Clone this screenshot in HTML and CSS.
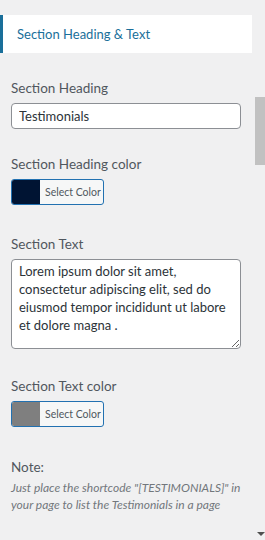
FILE: index.html
```html
<!DOCTYPE html>
<html lang="en">
<head>
    <meta charset="UTF-8">
    <meta name="viewport" content="width=device-width, initial-scale=1.0">
    <title>Testimonials Settings</title>
    <link rel="stylesheet" href="styles.css">
</head>
<body>
    <div class="panel">
        <div class="tab">Section Heading &amp; Text</div>

        <div class="field">
            <label for="heading">Section Heading</label>
            <input type="text" id="heading" value="Testimonials">
        </div>

        <div class="field">
            <label>Section Heading color</label>
            <button type="button" class="color-btn">
                <span class="swatch navy"></span>
                <span class="btn-text">Select Color</span>
            </button>
        </div>

        <div class="field wide">
            <label for="text">Section Text</label>
            <textarea id="text" rows="4">Lorem ipsum dolor sit amet, consectetur adipiscing elit, sed do eiusmod tempor incididunt ut labore et dolore magna .</textarea>
        </div>

        <div class="field after-text">
            <label>Section Text color</label>
            <button type="button" class="color-btn">
                <span class="swatch grey"></span>
                <span class="btn-text">Select Color</span>
            </button>
        </div>

        <div class="note">
            <h4>Note:</h4>
            <p>Just place the shortcode "[TESTIMONIALS]" in your page to list the Testimonials in a page</p>
        </div>

        <!-- fake scrollbar of the customizer pane -->
        <div class="scrollbar">
            <div class="thumb"></div>
            <div class="arrow"></div>
        </div>
    </div>
</body>
</html>
```

FILE: styles.css
```css
body {
    margin: 0;
    padding: 0;
    background: #f0f0f1;
    font-family: 'Lato', sans-serif;
    color: #3c434a;
}

.panel {
    position: relative;
    height: 540px;
    padding-top: 15px;
    box-sizing: border-box;
}

.tab {
    width: 252px;
    height: 38px;
    box-sizing: border-box;
    background: #fff;
    border-left: 3px solid #1a6f9a;
    padding-left: 14px;
    line-height: 38px;
    font-size: 13px;
    color: #1a6f9a;
}

.field {
    padding: 0 24px 0 11px;
    margin-top: 26px;
}

.field.wide {
    margin-top: 30px;
}

.field.after-text {
    margin-top: 28px;
}

label {
    display: block;
    font-size: 13.5px;
    color: #50575e;
    line-height: 18px;
    margin-bottom: 6px;
}

input[type="text"],
textarea {
    display: block;
    width: 230px;
    box-sizing: border-box;
    border: 1px solid #8c8f94;
    border-radius: 4px;
    background: #fff;
    font-family: 'Lato', sans-serif;
    font-size: 13px;
    color: #2c3338;
    margin: 0;
}

input[type="text"] {
    height: 26px;
    padding: 0 7px;
}

textarea {
    height: 90px;
    padding: 2px 6px 2px 7px;
    line-height: 18px;
    resize: vertical;
}

.color-btn {
    display: flex;
    align-items: stretch;
    width: 93px;
    height: 26px;
    padding: 0;
    border: 1px solid #2271b1;
    border-radius: 3px;
    background: #f6f7f7;
    overflow: hidden;
    cursor: pointer;
}

.swatch {
    width: 28px;
}

.swatch.navy {
    background: #001433;
}

.swatch.grey {
    background: #7f7f7f;
}

.btn-text {
    flex: 1;
    padding-left: 5px;
    text-align: left;
    white-space: nowrap;
    font-family: 'Lato', sans-serif;
    font-size: 10.5px;
    line-height: 24px;
    color: #50575e;
}

.note {
    padding: 0 14px 0 11px;
    margin-top: 31px;
}

.note h4 {
    margin: 0 0 3px;
    font-size: 13.5px;
    font-weight: normal;
    line-height: 18px;
    color: #50575e;
}

.note p {
    margin: 0;
    font-size: 12px;
    font-style: italic;
    line-height: 17px;
    color: #72777c;
}

.scrollbar {
    position: absolute;
    top: 0;
    right: 0;
    width: 11px;
    height: 540px;
}

.thumb {
    position: absolute;
    top: 97px;
    left: 1px;
    width: 10px;
    height: 68px;
    background: #c1c1c1;
}

.arrow {
    position: absolute;
    bottom: 4px;
    left: 3px;
    width: 0;
    height: 0;
    border-left: 4px solid transparent;
    border-right: 4px solid transparent;
    border-top: 4px solid #505050;
}
```
